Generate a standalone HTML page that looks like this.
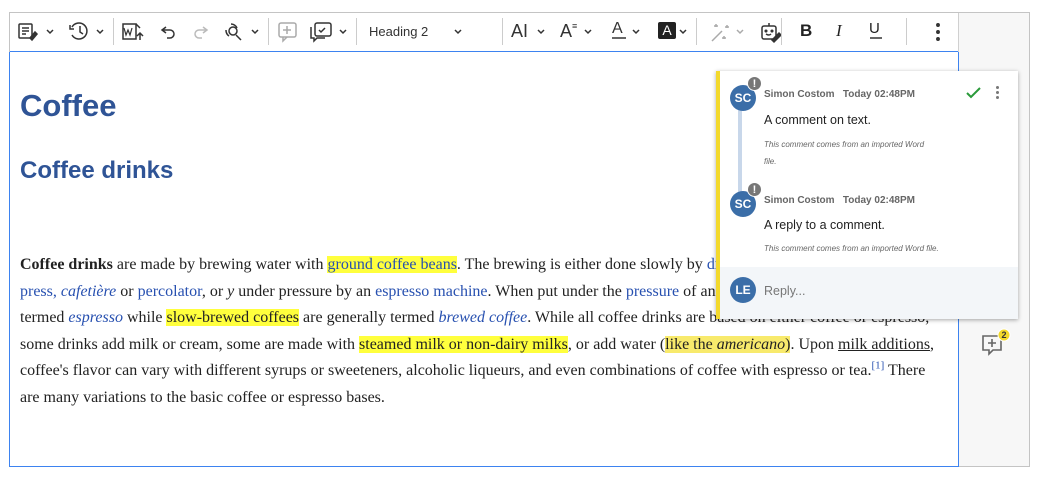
<!DOCTYPE html>
<html><head><meta charset="utf-8"><style>
*{margin:0;padding:0;box-sizing:border-box}
body{width:1039px;height:477px;background:#fff;position:relative;overflow:hidden;font-family:"Liberation Sans",sans-serif}
.frame{position:absolute;left:9px;top:12px;width:1021px;height:455px;border:1px solid #c4c4c4}
.tb{position:absolute;left:10px;top:13px;width:948px;height:39px;border-bottom:1px solid #3d83f0}
.side{position:absolute;left:958px;top:13px;width:71px;height:453px;background:#f7f7f7;border-left:1px solid #d0d0d0}
.edit{position:absolute;left:9px;top:52px;width:950px;height:415px;border:1px solid #3d83f0;border-top:none;background:#fff}
.sep{position:absolute;top:18px;width:1px;height:27px;background:#ccc}
h1{position:absolute;left:20px;top:88px;font-size:31px;font-weight:bold;color:#2f5496;font-family:"Liberation Sans",sans-serif}
h2{position:absolute;left:20px;top:157px;font-size:24px;font-weight:bold;color:#2f5496}
.p{position:absolute;left:20px;top:252px;font-family:"Liberation Serif",serif;font-size:16px;line-height:26.5px;color:#222;white-space:nowrap}
.a{color:#2750b0}
.hl{background:#ffff3d}
.hl2{background:#f8ea6c}
.pop{position:absolute;left:716px;top:71px;width:302px;height:248px;background:#fff;border-left:4px solid #f3d92c;box-shadow:0 1px 4px rgba(0,0,0,.35)}
.av{position:absolute;width:26px;height:26px;border-radius:50%;background:#3b6ea8;color:#fff;font-size:12px;font-weight:bold;text-align:center;line-height:26px}
.bang{position:absolute;width:15px;height:15px;border-radius:50%;background:#777;color:#fff;font-size:11px;font-weight:bold;text-align:center;line-height:14px;border:1px solid #fff}
.nm{position:absolute;font-size:10px;font-weight:bold;color:#666}
.tx{position:absolute;font-size:12.5px;color:#222}
.it{position:absolute;font-size:8px;font-style:italic;color:#666;line-height:17px}
sup{line-height:0}
</style></head><body>
<div class="frame"></div>
<div class="side"></div>
<div class="tb"></div>
<div class="edit"></div>
<svg style="position:absolute;left:0;top:0" width="1039" height="52" fill="none" stroke="#333" stroke-width="1.5">
<rect x="19" y="24" width="13" height="14" rx="1"/><path d="M22 28h7M22 31h7M22 34h4"/><path d="M30 38l5-6 2 2-5 6z" fill="#333"/>
<path d="M47 30l3 3 3-3"/>
<path d="M72 27a8 8 0 1 1 0 8M70 25v4h4M80 26v6l3 2"/>
<path d="M97 30l3 3 3-3"/>
<rect x="123" y="24" width="13" height="15"/><path d="M124 28l2 7 2-5 2 5 2-7" stroke-width="1.2"/><path d="M140 40v-7M137 36l3-3 3 3"/><path d="M136 24l4 4"/>
<path d="M166 27l-4 3 4 3M162 30h8a4 4 0 0 1 0 8h-3"/>
<path d="M203 27l4 3-4 3M207 30h-8a4 4 0 0 0 0 8h3" stroke="#bbb"/>
<path d="M231 24a7 7 0 0 1 6 4M229 36a7 7 0 0 1-3-6M236 35l5 5"/><circle cx="233" cy="31" r="4"/>
<path d="M252 30l3 3 3-3"/>
<rect x="279" y="23" width="17" height="14" rx="2" stroke="#aaa"/><path d="M287 26v8M283 30h8M283 37l0 4 4-4" stroke="#aaa"/>
<rect x="315" y="23" width="16" height="13" rx="2"/><path d="M311 27v11h3v3l3-3h8"/><path d="M319 30l2 2 4-4"/>
<path d="M340 30l3 3 3-3"/>
<path d="M455 30l3 3 3-3"/>
<path d="M538 30l3 3 3-3"/>
<path d="M585 30l3 3 3-3"/>
<path d="M612 38h14"/>
<path d="M633 30l3 3 3-3"/>
<path d="M680 30l3 3 3-3"/>
<path d="M712 41l10-10M716 24v3M714 26h4M727 25v3M725 27h4M724 36v3M722 38h4" stroke="#aaa"/>
<path d="M737 30l3 3 3-3" stroke="#aaa"/>
<rect x="762" y="26" width="14" height="13" rx="2"/><path d="M769 26v-3M766 34q3 2 5 0"/><circle cx="766" cy="31" r=".8" fill="#333"/><circle cx="772" cy="31" r=".8" fill="#333"/><path d="M772 40l7-7 2 2-7 7z" fill="#333"/>
<path d="M870 38h12"/>
<circle cx="938" cy="25" r="1.2" fill="#333"/><circle cx="938" cy="32" r="1.2" fill="#333"/><circle cx="938" cy="39" r="1.2" fill="#333"/>
</svg>
<div class="sep" style="left:113px"></div><div class="sep" style="left:268px"></div><div class="sep" style="left:356px"></div><div class="sep" style="left:502px"></div><div class="sep" style="left:696px"></div><div class="sep" style="left:781px"></div><div class="sep" style="left:906px"></div>
<div style="position:absolute;left:369px;top:24px;font-size:13px;color:#333">Heading 2</div>
<div style="position:absolute;left:511px;top:21px;font-size:18px;color:#333">AI</div>
<div style="position:absolute;left:560px;top:21px;font-size:18px;color:#333">A<span style="font-size:9px;vertical-align:top">≡</span></div>
<div style="position:absolute;left:612px;top:20px;font-size:16px;color:#333">A</div>
<div style="position:absolute;left:658px;top:22px;width:18px;height:17px;background:#222;color:#fff;font-size:14px;text-align:center;line-height:17px;border-radius:2px">A</div>
<div style="position:absolute;left:800px;top:21px;font-size:17px;font-weight:bold;color:#222">B</div>
<div style="position:absolute;left:836px;top:21px;font-size:17px;font-style:italic;font-family:'Liberation Serif',serif;color:#222">I</div>
<div style="position:absolute;left:869px;top:20px;font-size:15px;color:#222">U</div>

<h1>Coffee</h1>
<h2>Coffee drinks</h2>
<div class="p"><b>Coffee drinks</b> are made by brewing water with <span class="hl"><span class="a">ground coffee beans</span></span>. The brewing is either done slowly by <span class="a">drip, filter, French</span><br>
<span class="a">press, <i>cafetière</i></span> or <span class="a">percolator</span>, or <i>y</i> under pressure by an <span class="a">espresso machine</span>. When put under the <span class="a">pressure</span> of an espresso machine, it is<br>
termed <i class="a">espresso</i> while <span class="hl">slow-brewed coffees</span> are generally termed <i class="a">brewed coffee</i>. While all coffee drinks are based on either coffee or espresso,<br>
some drinks add milk or cream, some are made with <span class="hl">steamed milk or non-dairy milks</span>, or add water (<span class="hl2">like the <i>americano</i>)</span>. Upon <u>milk additions</u>,<br>
coffee's flavor can vary with different syrups or sweeteners, alcoholic liqueurs, and even combinations of coffee with espresso or tea.<sup class="a" style="font-size:11px">[1]</sup> There<br>
are many variations to the basic coffee or espresso bases.</div>

<div class="pop">
<div style="position:absolute;left:18px;top:25px;width:4px;height:100px;background:#c8d7ea"></div>
<div class="av" style="left:10px;top:14px">SC</div><div class="bang" style="left:27px;top:5px">!</div>
<div class="nm" style="left:44px;top:18px">Simon Costom&nbsp;&nbsp;&nbsp;Today 02:48PM</div>
<svg style="position:absolute;left:246px;top:16px" width="16" height="12"><path d="M1 6l4 4 9-9" stroke="#2a9a3a" stroke-width="2" fill="none"/></svg>
<div style="position:absolute;left:276px;top:15px;width:3px"><div style="width:3px;height:3px;background:#777;border-radius:50%;margin-bottom:2px"></div><div style="width:3px;height:3px;background:#777;border-radius:50%;margin-bottom:2px"></div><div style="width:3px;height:3px;background:#777;border-radius:50%"></div></div>
<div class="tx" style="left:44px;top:42px">A comment on text.</div>
<div class="it" style="left:44px;top:65px">This comment comes from an imported Word<br>file.</div>
<div class="av" style="left:10px;top:120px">SC</div><div class="bang" style="left:27px;top:111px">!</div>
<div class="nm" style="left:44px;top:124px">Simon Costom&nbsp;&nbsp;&nbsp;Today 02:48PM</div>
<div class="tx" style="left:44px;top:147px">A reply to a comment.</div>
<div class="it" style="left:44px;top:169px">This comment comes from an imported Word file.</div>
<div style="position:absolute;left:0;top:196px;width:298px;height:52px;background:#f3f6f9"></div>
<div class="av" style="left:10px;top:206px">LE</div>
<div style="position:absolute;left:44px;top:213px;font-size:12.5px;color:#777">Reply...</div>
</div>
<svg style="position:absolute;left:980px;top:326px" width="32" height="36" fill="none" stroke="#666" stroke-width="1.6">
<path d="M3 10h18v14h-8l-4 4v-4H3z"/><path d="M12 13v8M8 17h8"/>
<circle cx="24" cy="9" r="6" fill="#f3d92c" stroke="#fff" stroke-width="1"/>
<text x="24" y="12" font-size="9" font-weight="bold" fill="#333" stroke="none" text-anchor="middle" font-family="Liberation Sans">2</text>
</svg>
</body></html>
